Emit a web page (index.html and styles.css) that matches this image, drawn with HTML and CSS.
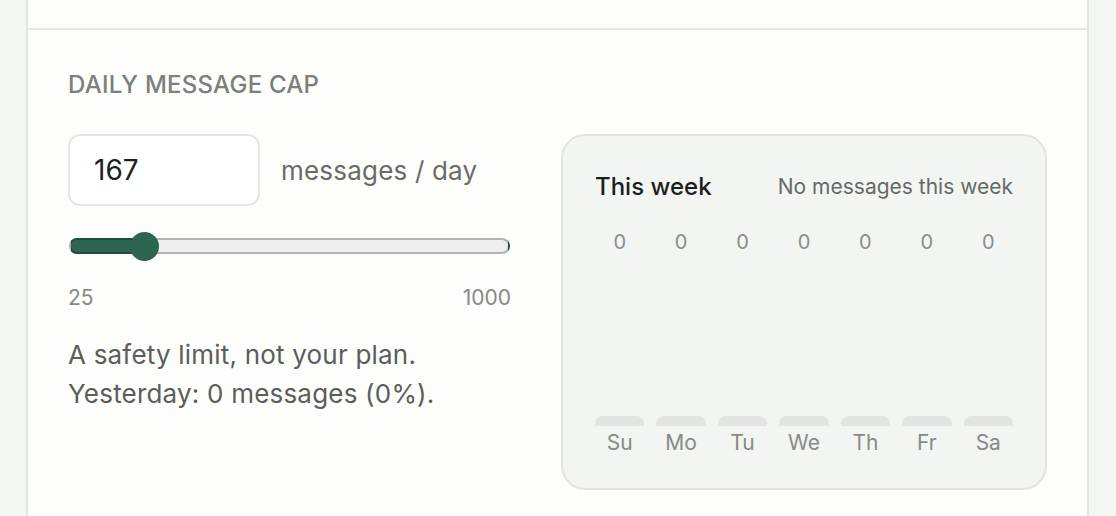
FILE: index.html
```html
<!DOCTYPE html>
<html lang="en">
<head>
<meta charset="utf-8">
<title>Daily message cap</title>
<link rel="stylesheet" href="styles.css">
</head>
<body>
<div class="card">
  <div class="card-top"></div>
  <section class="cap-section">
    <h3 class="section-label">DAILY MESSAGE CAP</h3>
    <div class="cap-grid">
      <div class="cap-controls">
        <div class="input-row">
          <input class="cap-input" type="text" value="167" aria-label="Daily message cap">
          <span class="unit">messages / day</span>
        </div>
        <input class="cap-range" type="range" min="25" max="1000" value="167" style="--fill: 16%" aria-label="Daily message cap slider">
        <div class="range-labels"><span>25</span><span>1000</span></div>
        <p class="cap-note">A safety limit, not your plan.<br>Yesterday: 0 messages (0%).</p>
      </div>
      <div class="week-panel">
        <div class="week-head">
          <span class="week-title">This week</span>
          <span class="week-sub">No messages this week</span>
        </div>
        <div class="week-chart">
          <div class="day"><span class="day-val">0</span><div class="bar-area"><div class="bar"></div></div><span class="day-name">Su</span></div>
          <div class="day"><span class="day-val">0</span><div class="bar-area"><div class="bar"></div></div><span class="day-name">Mo</span></div>
          <div class="day"><span class="day-val">0</span><div class="bar-area"><div class="bar"></div></div><span class="day-name">Tu</span></div>
          <div class="day"><span class="day-val">0</span><div class="bar-area"><div class="bar"></div></div><span class="day-name">We</span></div>
          <div class="day"><span class="day-val">0</span><div class="bar-area"><div class="bar"></div></div><span class="day-name">Th</span></div>
          <div class="day"><span class="day-val">0</span><div class="bar-area"><div class="bar"></div></div><span class="day-name">Fr</span></div>
          <div class="day"><span class="day-val">0</span><div class="bar-area"><div class="bar"></div></div><span class="day-name">Sa</span></div>
        </div>
      </div>
    </div>
  </section>
</div>
</body>
</html>
```

FILE: styles.css
```css
* { box-sizing: border-box; }

html, body {
  margin: 0;
  height: 100%;
}

body {
  background: #f4f6f4;
  font-family: Inter, "Liberation Sans", sans-serif;
  padding: 0 0 0 26px;
  overflow: hidden;
}

.card {
  width: 1063px;
  background: #fdfdfb;
  border: 2px solid #e4e6e3;
  border-top: none;
  min-height: 100%;
}

.card-top {
  height: 28px;
}

.cap-section {
  border-top: 2px solid #e4e6e3;
  padding: 40px 40px;
}

.section-label {
  margin: 0 0 34px;
  font-size: 24px;
  line-height: 30px;
  font-weight: 500;
  color: #7b807b;
  letter-spacing: 0.01em;
}

.cap-grid {
  display: grid;
  grid-template-columns: 443px 1fr;
  column-gap: 50px;
  align-items: start;
}

.input-row {
  display: flex;
  align-items: center;
  gap: 21px;
}

.cap-input {
  width: 192px;
  height: 72px;
  border: 2px solid #e4e6e3;
  border-radius: 12px;
  background: #ffffff;
  padding: 0 24px;
  font-family: inherit;
  font-size: 28px;
  color: #1c1f1d;
  outline: none;
}

.unit {
  font-size: 26px;
  letter-spacing: 0.2px;
  color: #686c69;
}

.cap-range {
  -webkit-appearance: none;
  appearance: none;
  display: block;
  width: 441px;
  height: 30px;
  margin: 25px 0 0 1px;
  background: transparent;
}

.cap-range::-webkit-slider-runnable-track {
  height: 16px;
  border-radius: 8px;
  border: 2px solid rgba(0, 0, 0, 0.25);
  background: linear-gradient(to right, #2d6551 var(--fill), #eeeeee var(--fill));
}

.cap-range::-webkit-slider-thumb {
  -webkit-appearance: none;
  appearance: none;
  width: 29px;
  height: 29px;
  border-radius: 50%;
  background: #2d6551;
  border: none;
  margin-top: -8.5px;
}

.range-labels {
  margin-top: 23px;
  display: flex;
  justify-content: space-between;
  font-size: 21px;
  line-height: 28px;
  color: #868986;
}

.cap-note {
  margin: 23px 0 0;
  font-size: 26px;
  line-height: 39px;
  letter-spacing: 0.2px;
  color: #5a5e5b;
}

.week-panel {
  border: 2px solid #e1e4e0;
  border-radius: 24px;
  background: #f2f5f2;
  padding: 32px 32px 32px 32px;
}

.week-head {
  display: flex;
  justify-content: space-between;
  align-items: center;
  height: 36px;
}

.week-title {
  font-size: 24px;
  font-weight: 500;
  color: #1c1f1d;
}

.week-sub {
  font-size: 21px;
  color: #666a67;
}

.week-chart {
  margin-top: 24px;
  display: grid;
  grid-template-columns: repeat(7, 1fr);
  column-gap: 12px;
}

.day {
  display: flex;
  flex-direction: column;
  align-items: center;
}

.day-val {
  font-size: 20px;
  line-height: 28px;
  color: #8a8d8a;
}

.bar-area {
  width: 100%;
  height: 170px;
  display: flex;
  align-items: flex-end;
}

.bar {
  width: 100%;
  height: 10px;
  background: #e2e5e2;
  border-radius: 8px 8px 0 0;
}

.day-name {
  margin-top: 4px;
  font-size: 21px;
  line-height: 26px;
  color: #878a87;
}
```
